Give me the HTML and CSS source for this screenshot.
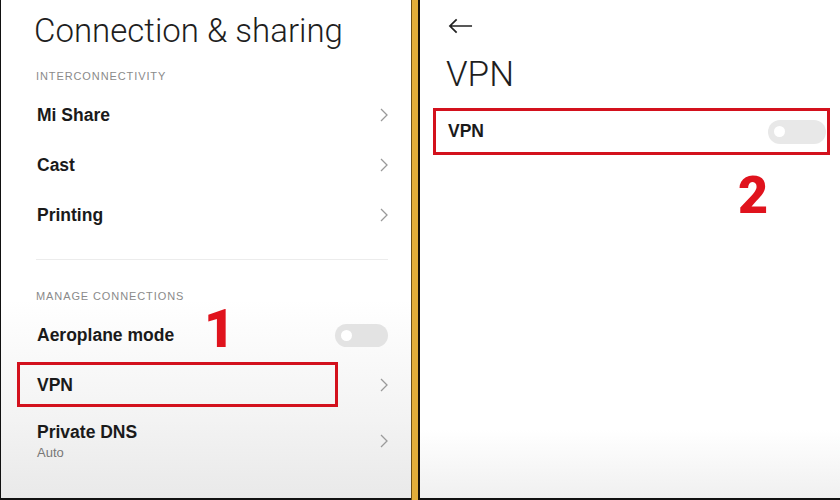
FILE: index.html
```html
<!DOCTYPE html>
<html>
  <head>
    <meta charset="UTF-8">
    <title>Connection &amp; sharing - VPN</title>
    <link rel="stylesheet" href="styles.css">
  </head>
  <body>
    <div class="frame">
      <!-- first screen: settings list -->
      <div class="screen left">
        <h1 class="title">Connection &amp; sharing</h1>
        <div class="section">INTERCONNECTIVITY</div>
        <div class="row"><span class="label">Mi Share</span><svg class="chev" viewBox="0 0 8 14"><polyline points="1,1 7,7 1,13"/></svg></div>
        <div class="row"><span class="label">Cast</span><svg class="chev" viewBox="0 0 8 14"><polyline points="1,1 7,7 1,13"/></svg></div>
        <div class="row"><span class="label">Printing</span><svg class="chev" viewBox="0 0 8 14"><polyline points="1,1 7,7 1,13"/></svg></div>
        <div class="divider"></div>
        <div class="section manage">MANAGE CONNECTIONS</div>
        <div class="row"><span class="label">Aeroplane mode</span><span class="toggle"></span></div>
        <div class="row"><span class="label">VPN</span><svg class="chev" viewBox="0 0 8 14"><polyline points="1,1 7,7 1,13"/></svg></div>
        <div class="row tall">
          <div>
            <div class="label">Private DNS</div>
            <div class="sub">Auto</div>
          </div>
          <svg class="chev" viewBox="0 0 8 14"><polyline points="1,1 7,7 1,13"/></svg>
        </div>
        <div class="mark box-one"></div>
        <div class="step step-one">1</div>
      </div>

      <div class="split"></div>

      <!-- second screen: VPN page -->
      <div class="screen right">
        <svg class="back" viewBox="0 0 26 16"><path d="M25 8H2M9 1L2 8l7 7"/></svg>
        <h1 class="title big">VPN</h1>
        <div class="vpn-row">
          <span class="label">VPN</span>
          <span class="toggle wide"></span>
        </div>
        <div class="step step-two">2</div>
      </div>
    </div>
  </body>
</html>
```

FILE: styles.css
```css
body {
  margin: 0;
  font-family: "Liberation Sans", Arial, sans-serif;
  background: #111;
}

.frame {
  display: flex;
  width: 840px;
  height: 500px;
  overflow: hidden;
}

.screen {
  position: relative;
  box-sizing: border-box;
  height: 498px;
}

.left {
  width: 410px;
  margin-left: 1px;
  padding: 13px 23px 0 35px;
  background: linear-gradient(#fff 0, #fff 300px, #f3f3f3 420px, #e9e9e9 498px);
}

.right {
  width: 420px;
  padding: 18px 0 0 26px;
  background: linear-gradient(#fff 0, #fff 430px, #f0f0f0 498px);
}

.split {
  width: 6px;
  background: #e2ad3a;
  border-left: 1px solid #6b4d14;
  border-right: 2px solid #1a1208;
}

.title {
  margin: 0 0 0 -2px;
  font-family: Roboto, sans-serif;
  font-size: 33px;
  font-weight: 300;
  line-height: 36px;
  color: #1e1e1e;
}

.title.big {
  margin: 23px 0 0;
  font-size: 35px;
}

.section {
  margin-top: 20px;
  font-size: 11px;
  line-height: 14px;
  color: #8a8a8a;
  letter-spacing: 0.9px;
}

.section.manage {
  margin-top: 29px;
}

.row {
  display: flex;
  align-items: center;
  justify-content: space-between;
  height: 50px;
  padding-left: 1px;
}

.section + .row {
  margin-top: 7px;
}

.row.tall {
  height: 58px;
  margin-top: 2px;
}

.label {
  font-size: 17.5px;
  font-weight: 700;
  color: #1a1a1a;
}

.sub {
  margin-top: 2px;
  font-size: 13px;
  color: #777;
}

.chev {
  width: 8px;
  height: 14px;
  fill: none;
  stroke: #9a9a9a;
  stroke-width: 1.3;
}

.divider {
  height: 1px;
  margin-top: 19px;
  background: #ececec;
}

.toggle {
  position: relative;
  width: 53px;
  height: 23px;
  border-radius: 12px;
  background: #e3e3e3;
}

.toggle::after {
  content: "";
  position: absolute;
  left: 6px;
  top: 6px;
  width: 11px;
  height: 11px;
  border-radius: 50%;
  background: #fff;
}

.toggle.wide {
  width: 58px;
  height: 24px;
  background: #e8e8e8;
}

.back {
  display: block;
  width: 25px;
  height: 16px;
  margin-left: 2px;
  fill: none;
  stroke: #222;
  stroke-width: 1.8;
}

.vpn-row {
  box-sizing: border-box;
  display: flex;
  align-items: center;
  justify-content: space-between;
  width: 397px;
  height: 47px;
  margin: 15px 0 0 -13px;
  padding: 0 1px 0 12px;
  border: 3px solid #d3111d;
}

.mark {
  position: absolute;
  box-sizing: border-box;
  border: 3px solid #d3111d;
}

.box-one {
  left: 16px;
  top: 362px;
  width: 321px;
  height: 45px;
}

.step {
  position: absolute;
  color: #e0131d;
  font-family: Roboto, sans-serif;
  font-weight: 900;
  line-height: 1;
}

.step-one {
  left: 203px;
  top: 303px;
  font-size: 53px;
}

.step-two {
  left: 318px;
  top: 170px;
  font-size: 52px;
}
```
